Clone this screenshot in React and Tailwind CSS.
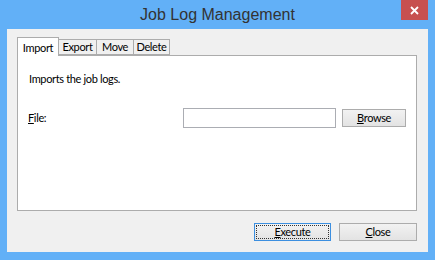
import React from "react";

const font = { fontFamily: 'Lato, "Liberation Sans", Arial, sans-serif' };
const titleFont = { fontFamily: '"Liberation Sans", Arial, sans-serif' };

function U({ children }) {
  return <span className="underline underline-offset-1">{children}</span>;
}

export default function App() {
  return (
    <div className="w-[435px] h-[260px] bg-[#62b0f7] flex flex-col text-[11px] tracking-[-0.35px] text-black" style={font}>
      <div className="h-[29px] flex items-start relative shrink-0">
        <div className="flex-1 text-center text-[16px] leading-[16px] pt-[7px] tracking-normal text-[#333]" style={titleFont}>Job Log Management</div>
        <div className="absolute right-[7px] top-0 w-[27px] h-[20px] bg-[#c7504f] flex items-center justify-center">
          <svg width="9" height="9" viewBox="0 0 9 9">
            <path d="M1 1 L8 8 M8 1 L1 8" stroke="#fff" strokeWidth="1.8" />
          </svg>
        </div>
      </div>
      <div className="mx-[7px] h-[223px] bg-[#f0f0f0] flex flex-col pt-[8px] pl-[10px] pr-[11px] shrink-0">
        <div className="flex items-end h-[18px] shrink-0">
          <div className="w-[42px] h-[19px] bg-white border border-b-0 border-[#acacac] flex items-start justify-center pt-[2px] relative z-10 -mb-px">Import</div>
          <div className="w-[38px] h-[16px] bg-[#f0f0f0] border border-l-0 border-[#acacac] flex items-center justify-center">Export</div>
          <div className="w-[37px] h-[16px] bg-[#f0f0f0] border border-l-0 border-[#acacac] flex items-center justify-center">Move</div>
          <div className="w-[36px] h-[16px] bg-[#f0f0f0] border border-l-0 border-[#acacac] flex items-center justify-center">Delete</div>
        </div>
        <div className="h-[156px] bg-white border border-[#acacac] flex flex-col pl-[11px] pr-[10px] pt-[16px] shrink-0">
          <div className="leading-[13px]">Imports the job logs.</div>
          <div className="flex items-center mt-[23px]">
            <div className="flex-1 -ml-[1px]"><U>F</U>ile:</div>
            <div className="w-[153px] h-[20px] border border-[#abadb3] bg-white"></div>
            <div className="ml-[6px] w-[64px] h-[18px] border border-[#acacac] bg-gradient-to-b from-[#f2f2f2] to-[#e3e3e3] flex items-center justify-center"><U>B</U>rowse</div>
          </div>
        </div>
        <div className="flex justify-end gap-[8px] mt-[12px]">
          <div className="w-[77px] h-[18px] border border-[#3c8fe0] bg-gradient-to-b from-[#f2f2f2] to-[#e3e3e3] p-[1px] flex">
            <div className="flex-1 border border-dotted border-[#333] flex items-center justify-center"><U>E</U>xecute</div>
          </div>
          <div className="w-[78px] h-[18px] border border-[#acacac] bg-gradient-to-b from-[#f2f2f2] to-[#e3e3e3] flex items-center justify-center"><U>C</U>lose</div>
        </div>
      </div>
    </div>
  );
}
